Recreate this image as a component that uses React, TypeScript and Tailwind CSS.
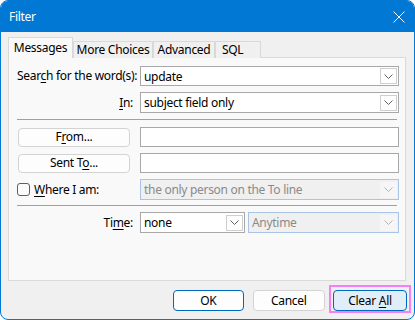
import React from 'react';

const font = { fontFamily: '"Noto Sans", "Open Sans", sans-serif' };

function Chevron({ color = '#606060' }: { color?: string }) {
  return (
    <svg width="9" height="5" viewBox="0 0 9 5" fill="none">
      <polyline points="0.5,0.5 4.5,4.5 8.5,0.5" stroke={color} strokeWidth="1" />
    </svg>
  );
}

function Combo({ value, disabled, className = '' }: { value: string; disabled?: boolean; className?: string }) {
  return (
    <div
      className={`flex items-center border ${disabled ? 'border-[#a9c4e4] bg-[#f0f0f0] text-[#8a8a8a]' : 'border-[#a8a8a8] bg-white text-black'} ${className}`}
    >
      <span className="flex-1 pl-[3px] leading-[17px] whitespace-nowrap overflow-hidden">{value}</span>
      <div
        className={`mr-[1px] w-[17px] h-[16px] flex items-center justify-center shrink-0 ${disabled ? 'bg-[#f6f6f6]' : 'border border-[#cfcfcf] bg-white'}`}
      >
        <Chevron color={disabled ? '#b4b4b4' : '#606060'} />
      </div>
    </div>
  );
}

function Label({ children }: { children: React.ReactNode }) {
  return <div className="w-[116px] mr-[7px] text-right whitespace-nowrap shrink-0">{children}</div>;
}

export default function App() {
  return (
    <div className="w-[415px] h-[320px] bg-white text-[12px] tracking-[-0.3px] text-black" style={font}>
      <div className="w-[415px] h-[320px] border border-[#0078d4] rounded-[8px] overflow-hidden bg-[#f0f0f0] flex flex-col">
        {/* title bar */}
        <div className="h-[31px] bg-[#0078d4] flex items-center pl-[8px] pr-[9px] text-white shrink-0">
          <span className="flex-1 text-[12px]">Filter</span>
          <svg width="12" height="12" viewBox="0 0 12 12">
            <path d="M0.5 0.5 L11.5 11.5 M11.5 0.5 L0.5 11.5" stroke="#ffffff" strokeWidth="1" />
          </svg>
        </div>

        <div className="px-[7px] pt-[6px]">
          {/* tabs */}
          <div className="flex items-end h-[20px] -mb-px relative z-10 whitespace-nowrap">
            <div className="h-[21px] w-[65px] border border-b-0 border-[#d9d9d9] bg-[#f9f9f9] flex items-center justify-center">
              Messages
            </div>
            <div className="h-[17px] w-[80px] border border-b-0 border-[#d9d9d9] bg-[#f0f0f0] flex items-center justify-center">
              More Choices
            </div>
            <div className="h-[17px] w-[62px] border border-b-0 border-[#d9d9d9] bg-[#f0f0f0] flex items-center justify-center">
              Advanced
            </div>
            <div className="h-[17px] w-[46px] border border-b-0 border-[#d9d9d9] bg-[#f0f0f0] flex items-center pl-[6px]">
              SQL
            </div>
          </div>

          {/* panel */}
          <div className="w-[398px] h-[224px] border border-[#d9d9d9] bg-[#f9f9f9] pl-[8px] pr-[6px] flex flex-col">
            <div className="mt-[8px] h-[20px] flex items-center">
              <Label>
                Sear<span className="underline underline-offset-2">c</span>h for the word(s):
              </Label>
              <Combo value="update" className="flex-1 h-[20px]" />
            </div>
            <div className="mt-[6px] h-[21px] flex items-center">
              <Label>
                <span className="underline underline-offset-2">I</span>n:
              </Label>
              <Combo value="subject field only" className="flex-1 h-[21px]" />
            </div>

            <div className="mt-[6px] h-px bg-[#a0a0a0] mr-[2px]" />

            <div className="mt-[7px] h-[20px] flex items-center">
              <button className="w-[112px] h-[19px] ml-px mr-[10px] rounded-[4px] border border-[#d3d3d3] bg-[#fdfdfd] leading-none">
                F<span className="underline underline-offset-2">r</span>om...
              </button>
              <div className="flex-1 h-[20px] border border-[#a8a8a8] bg-white" />
            </div>
            <div className="mt-[6px] h-[20px] flex items-center">
              <button className="w-[112px] h-[19px] ml-px mr-[10px] rounded-[4px] border border-[#d3d3d3] bg-[#fdfdfd] leading-none">
                Sent T<span className="underline underline-offset-2">o</span>...
              </button>
              <div className="flex-1 h-[20px] border border-[#a8a8a8] bg-white" />
            </div>
            <div className="mt-[6px] h-[21px] flex items-center">
              <div className="w-[123px] flex items-center shrink-0 whitespace-nowrap">
                <div className="w-[13px] h-[13px] rounded-[3px] border border-[#5f5f5f] bg-[#fbfbfb]" />
                <span className="ml-[4px]">
                  <span className="underline underline-offset-2">W</span>here I am:
                </span>
              </div>
              <Combo value="the only person on the To line" disabled className="flex-1 h-[21px]" />
            </div>

            <div className="mt-[5px] h-px bg-[#a0a0a0] mr-[2px]" />

            <div className="mt-[6px] h-[21px] flex items-center">
              <Label>
                Ti<span className="underline underline-offset-2">m</span>e:
              </Label>
              <Combo value="none" className="w-[105px] h-[21px]" />
              <Combo value="Anytime" disabled className="ml-[3px] flex-1 h-[21px]" />
            </div>
          </div>

          {/* footer */}
          <div className="mt-[9px] flex items-center">
            <button className="ml-[165px] w-[71px] h-[21px] rounded-[4px] border border-[#0067c0] bg-[#fdfdfd] leading-none">
              OK
            </button>
            <button className="ml-[9px] w-[73px] h-[21px] rounded-[4px] border border-[#d3d3d3] bg-[#fdfdfd] leading-none">
              Cancel
            </button>
            <div className="relative ml-[8px]">
              <button className="w-[74px] h-[21px] rounded-[4px] border border-[#0067c0] bg-[#e0eef9] leading-none">
                Clear <span className="underline underline-offset-2">A</span>ll
              </button>
              <div className="absolute -left-[4px] -top-[5px] w-[82px] h-[28px] border-2 border-[#f57ff5] pointer-events-none" />
            </div>
          </div>
        </div>
      </div>
    </div>
  );
}
